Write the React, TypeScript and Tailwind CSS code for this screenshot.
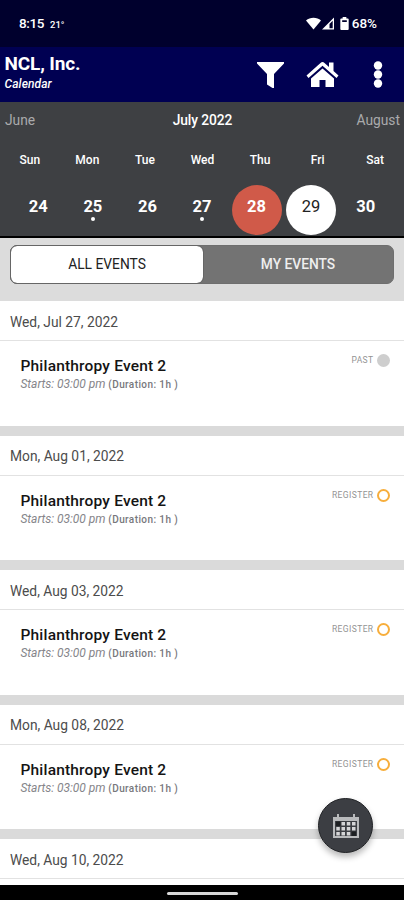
import React from 'react';

interface EventItem {
  date: string;
  title: string;
  starts: string;
  duration: string;
  status: 'PAST' | 'REGISTER';
}

interface Day {
  label: string;
  date: number;
  hasEvent?: boolean;
  circle?: string;
}

const days: Day[] = [
  { label: 'Sun', date: 24 },
  { label: 'Mon', date: 25, hasEvent: true },
  { label: 'Tue', date: 26 },
  { label: 'Wed', date: 27, hasEvent: true },
  { label: 'Thu', date: 28, circle: 'bg-[#d05a49] text-white font-bold' },
  { label: 'Fri', date: 29, circle: 'bg-white text-[#222222]' },
  { label: 'Sat', date: 30 },
];

const event = { title: 'Philanthropy Event 2', starts: '03:00 pm', duration: '1h' };

const events: EventItem[] = [
  { ...event, date: 'Wed, Jul 27, 2022', status: 'PAST' },
  { ...event, date: 'Mon, Aug 01, 2022', status: 'REGISTER' },
  { ...event, date: 'Wed, Aug 03, 2022', status: 'REGISTER' },
  { ...event, date: 'Mon, Aug 08, 2022', status: 'REGISTER' },
];

const StatusBar = () => (
  <div className="flex h-[47px] shrink-0 items-center justify-between bg-[#00002d] pl-[19px] pr-[27px] text-white">
    <div className="flex items-baseline">
      <span className="text-[13.5px] font-medium leading-4 tracking-[-0.4px]">8:15</span>
      <span className="ml-[6px] text-[9.5px] font-medium">21°</span>
    </div>
    <div className="flex items-center pb-px">
      <svg className="h-[13px] w-[15px]" viewBox="0 0 15 13" fill="currentColor">
        <path d="M0 3.5C4 -.3 11 -.3 15 3.5L7.5 12.5z" />
      </svg>
      <svg className="h-[13px] w-[14px]" viewBox="0 0 14 13" fill="currentColor">
        <path fillRule="evenodd" d="M1 12.5L13 .5v12zM8.5 7v4.3h3.2V3.8z" />
      </svg>
      <svg className="ml-[5px] h-[13px] w-[9px]" viewBox="0 0 9 14" fill="currentColor">
        <path fillRule="evenodd" d="M2.5 0h4v1.5H8q1 0 1 1V13q0 1-1 1H1q-1 0-1-1V2.5q0-1 1-1h1.5zM2 3.5V5.5h5v-2z" />
      </svg>
      <span className="ml-[3px] text-[13.5px] font-medium leading-4">68%</span>
    </div>
  </div>
);

const Header = () => (
  <div className="flex h-[55px] shrink-0 items-center justify-between bg-[#000052] pl-[4.5px] pr-[21px] text-white">
    <div>
      <h1 className="text-[19px] font-bold leading-[22px] tracking-[-0.15px]">NCL, Inc.</h1>
      <p className="pb-[4px] text-[12px] font-medium italic leading-[18px] tracking-[0.1px]">Calendar</p>
    </div>
    <div className="flex items-center">
      <svg className="h-[26px] w-[27px]" viewBox="0 0 27 26" fill="currentColor">
        <path d="M0 0h27v1.500L17 12v14h-1.500L10 22.500V12L0 1.500z" />
      </svg>
      <svg className="ml-[22px] h-[27px] w-[33px]" viewBox="0 0 33 27" fill="currentColor">
        <path d="M16.500 1Q17.500 1 18.500 2L23 6V1.500h4.500V10l5 4.500-2 2.500-14-12.200L2.500 17l-2-2.500L14.500 2q1-1 2-1z" />
        <path d="M16.500 7.500L28 17.500V26h-8.500v-7h-6v7H5v-8.500z" />
      </svg>
      <svg className="ml-[34px] h-[27px] w-[10px]" viewBox="0 0 10 27" fill="currentColor">
        <circle cx="5" cy="4.500" r="4.200" />
        <circle cx="5" cy="13.500" r="4.200" />
        <circle cx="5" cy="22.500" r="4.200" />
      </svg>
    </div>
  </div>
);

const WeekCalendar = () => (
  <div className="h-[136px] shrink-0 border-b-2 border-black bg-[#3e4043] text-white">
    <div className="grid h-9 grid-cols-3 items-center px-[5px] text-[13.8px]">
      <span className="text-[#aaaaac]">June</span>
      <span className="pl-px text-center font-medium tracking-[-0.1px]">July 2022</span>
      <span className="-mr-[1px] text-right text-[#aaaaac]">August</span>
    </div>
    <div className="grid h-[43px] grid-cols-7 items-center pl-px text-center text-[12px] font-medium">
      {days.map((day) => (
        <span key={day.label}>{day.label}</span>
      ))}
    </div>
    <div className="grid grid-cols-7 px-[11px] pt-[4px]">
      {days.map((day) => (
        <div key={day.date} className="flex justify-center">
          <div
            className={`flex h-[50px] w-[50px] shrink-0 flex-col items-center rounded-full pt-[11px] text-[16.5px] leading-[21px] ${
              day.circle || 'font-bold'
            }`}
          >
            {day.date}
            {day.hasEvent && <i className="h-1 w-1 rounded-full bg-white" />}
          </div>
        </div>
      ))}
    </div>
  </div>
);

const EventTabs = () => (
  <div className="h-[63px] shrink-0 bg-[#dcdcdc] px-[10px] pt-[7px]">
    <div className="flex h-[39px] rounded-[7px] border border-[#6e6e6e] bg-[#737373] text-[13.8px]">
      <button className="w-[192px] rounded-[6px] bg-white text-[#222222] outline outline-[#666666]">ALL EVENTS</button>
      <button className="flex-1 font-medium text-[#eeeeee]">MY EVENTS</button>
    </div>
  </div>
);

const DateHeader = ({ date }: { date: string }) => (
  <div className="flex h-10 items-center border-b border-[#e2e2e2] px-[10px] pt-[3px] text-[13.8px] text-[#4c4c4c]">
    {date}
  </div>
);

const EventCard = ({ item }: { item: EventItem }) => (
  <section className="h-[134.6px] shrink-0 border-b-[10px] border-[#dadada] bg-white">
    <DateHeader date={item.date} />
    <div className="flex justify-between pl-[20.5px] pr-[14.5px] pt-[13px]">
      <div className="pt-px">
        <h2 className="text-[15.5px] font-medium leading-[22px] tracking-[0.18px] text-[#141414]">{item.title}</h2>
        <p className="text-[12px] leading-[15px] text-[#85858a]">
          <span className="italic tracking-[-0.05px]">Starts: {item.starts}</span>{' '}
          <span className="text-[10px] font-medium tracking-[0.4px] text-[#77777c]">(Duration: {item.duration} )</span>
        </p>
      </div>
      <div className="flex h-[13px] items-center gap-[3px] text-[8.5px] tracking-[0.4px] text-[#939393]">
        {item.status}
        <span
          className={
            item.status === 'PAST'
              ? 'h-[13px] w-[13px] rounded-full bg-[#cecece]'
              : 'h-[13px] w-[13px] rounded-full border-2 border-[#f7ae3c]'
          }
        />
      </div>
    </div>
  </section>
);

const CalendarButton = () => (
  <button className="absolute left-[318px] top-[798px] flex h-[55px] w-[55px] items-center justify-center rounded-full border border-[#202225] bg-[#3c3e43] shadow-[0_4px_6px_rgba(0,0,0,0.28)]">
    <svg className="h-[26px] w-[26px]" viewBox="0 0 26 26">
      <path fill="#b9babc" fillRule="evenodd" d="M0 4h4V1h2v3h14V1h2v3h4v21H0zM2 8v15h22V8z" />
      <g fill="#d6d6d8">
        <path d="M8.500 9h3.500v3.500H8.500zM13.800 9h3.500v3.500h-3.500zM19 9h3.500v3.500H19z" />
        <path d="M3.300 14h3.500v3.500H3.300zM8.500 14h3.500v3.500H8.500zM13.800 14h3.500v3.500h-3.500zM19 14h3.500v3.500H19z" />
        <path d="M3.300 19h3.500v3.500H3.300zM8.500 19h3.500v3.500H8.500zM13.800 19h3.500v3.500h-3.500z" />
      </g>
      <path fill="#1d1f22" d="M3 8.500h4.500v4.500H3zM18.500 18.500h4.500v4.500h-4.500z" />
    </svg>
  </button>
);

const App = () => {
  return (
    <div className="relative flex h-[900px] w-[404px] flex-col overflow-hidden bg-white font-['Roboto',sans-serif]">
      <StatusBar />
      <Header />
      <WeekCalendar />
      <EventTabs />
      <main className="flex min-h-0 flex-1 flex-col">
        {events.map((item) => (
          <EventCard key={item.date} item={item} />
        ))}
        <DateHeader date="Wed, Aug 10, 2022" />
      </main>
      <div className="flex h-[15px] shrink-0 justify-center bg-black pt-[7px]">
        <div className="h-[3px] w-[71px] rounded-full bg-[#d8d8d8]" />
      </div>
      <CalendarButton />
    </div>
  );
};

export default App;
